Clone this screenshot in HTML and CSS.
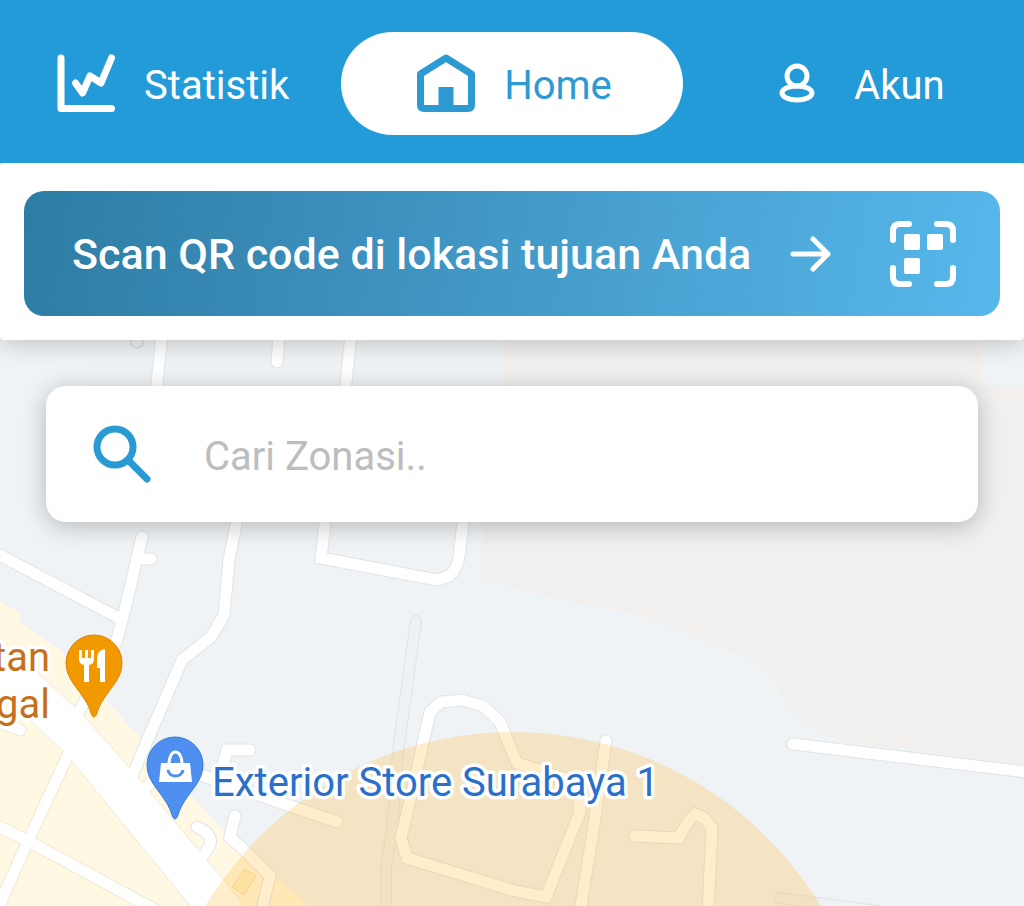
FILE: index.html
```
<!DOCTYPE html>
<html lang="id">
<head>
    <meta charset="UTF-8">
    <meta name="viewport" content="width=device-width, initial-scale=1.0">
    <title>Home</title>
    <link rel="stylesheet" href="styles.css">
</head>
<body>
    <nav class="navbar">
        <a href="#statistik" class="nav-item">
            <svg class="nav-icon" viewBox="0 0 60 60" fill="none" stroke="currentColor" stroke-width="7" stroke-linecap="round" stroke-linejoin="round">
                <path d="M5 4V54.500H55.500"/>
                <path d="M19.500 29L26.500 39L34 22L45 29L55.500 4"/>
            </svg>
            <span>Statistik</span>
        </a>
        <a href="#home" class="nav-item active">
            <svg class="nav-icon" viewBox="0 0 60 60">
                <path d="M30 4L55.500 20V51Q55.500 54.500 52 54.500H8Q4.500 54.500 4.500 51V20Z" fill="none" stroke="currentColor" stroke-width="7" stroke-linejoin="round"/>
                <path d="M22.500 33H37.500V54H22.500Z" fill="currentColor"/>
            </svg>
            <span>Home</span>
        </a>
        <a href="#akun" class="nav-item">
            <svg class="nav-icon" viewBox="0 0 60 60" fill="none" stroke="currentColor" stroke-width="5">
                <circle cx="31" cy="22" r="10"/>
                <ellipse cx="31" cy="39" rx="15" ry="7"/>
            </svg>
            <span>Akun</span>
        </a>
    </nav>

    <div class="scan-panel">
        <button type="button" class="scan-btn">
            <span>Scan QR code di lokasi tujuan Anda</span>
            <svg class="arrow" viewBox="0 0 42 42" fill="none" stroke="currentColor" stroke-width="5" stroke-linecap="round" stroke-linejoin="round">
                <path d="M3 21H38M23 6L38 21L23 36"/>
            </svg>
            <svg class="qr" viewBox="0 0 66 66">
                <path d="M3 19V10Q3 3 10 3H19M47 3H56Q63 3 63 10V19M63 47V56Q63 63 56 63H47M19 63H10Q3 63 3 56V47" fill="none" stroke="currentColor" stroke-width="6" stroke-linecap="round"/>
                <g fill="currentColor">
                    <rect x="14" y="13" width="16" height="16" rx="2"/>
                    <rect x="37" y="13" width="16" height="16" rx="2"/>
                    <rect x="14" y="37" width="16" height="16" rx="2"/>
                </g>
            </svg>
        </button>
    </div>

    <main class="map-area">
        <svg class="map" viewBox="0 340 1024 566" preserveAspectRatio="xMinYMin slice">
            <defs>
                <g id="roads">
                    <path d="M162 335L156 392M279 335L277 362M351 335L345 392"/>
                    <path d="M-10 550L119 618M142 537L126 605L116 643L77 715M141 559H151"/>
                    <path d="M238 515L229 560L224 615L211 637L182 660L132 776"/>
                    <path d="M326 515L321 558L437 580L449 576Q457 570 459 557L464 515"/>
                    <path d="M430 712L441 702L462 700L483 706L500 722L517 763L576 782L580 812L546 897L515 891L407 858L401 838L409 805Z"/>
                    <path d="M606 741L594 825L580 912"/>
                    <path d="M635 836L679 838Q686 822 695 814L703 817L712 828L708 912"/>
                    <path d="M793 744L1034 773"/>
                    <path d="M250 750H227L222 770M195 773L337 822"/>
                    <path d="M197 827Q215 835 209 847L200 860M235 816L230 837L252 858L270 876L262 908"/>
                </g>
                <g id="streets">
                    <path d="M68 755L28 841L-2 908M-10 822L28 841L152 908M-5 720L20 730M140 794L158 775"/>
                </g>
            </defs>

            <!-- land -->
            <rect y="340" width="1024" height="566" fill="#f0f3f5"/>
            <path d="M502 340V386L483 520L481 578Q560 603 635 613Q665 624 690 636L745 657Q775 675 783 700Q795 724 845 742L1024 765V385H982V340Z" fill="#f1f0ee"/>
            <path d="M0 601L20 613V622L60 650L142 740L197 802L240 848L310 906H0Z" fill="#fff8e3"/>
            <circle cx="137" cy="342" r="6" fill="none" stroke="#dfe1e4" stroke-width="2"/>

            <!-- unnamed lanes -->
            <g class="lane-edge">
                <path d="M416 621L398 752L392 830L386 868V912M780 898L900 914"/>
            </g>
            <g class="lane">
                <path d="M416 621L398 752L392 830L386 868V912M780 898L900 914"/>
            </g>

            <!-- roads, edge first and then the surface -->
            <use href="#streets" class="street-edge"/>
            <use href="#roads" class="road-edge"/>
            <path d="M-5 662L30 665L84 716L129 767L222 878L250 912H195L65 753L-5 688Z" fill="#fff" stroke="#f0e8d3" stroke-width="1"/>
            <use href="#streets" class="road"/>
            <use href="#roads" class="road"/>
            <path d="M245 869L256 876L244 895L232 887Z" fill="#ffefc4" stroke="#ecdcb2"/>

            <!-- selected zone -->
            <circle cx="513" cy="1091" r="359" fill="#ffb72f" fill-opacity="0.25"/>

            <!-- restaurant pin -->
            <path d="M94 717C91 717 91 709 85 700C77 687 66 678 66 663A28 28 0 0 1 122 663C122 678 111 687 103 700C97 709 97 717 94 717Z" fill="#f29900" stroke="#d98508"/>
            <g fill="#fff">
                <path d="M79 650V659Q79 664 84 665V682H89V665Q94 664 94 659V650H91V658H88V650H85V658H82V650Z"/>
                <path d="M105 649Q97 650 97 659V668H100V682H105Z"/>
            </g>

            <!-- shop pin -->
            <path d="M175 819C172 819 172 811 166 802C158 789 147 780 147 765A28 28 0 0 1 203 765C203 780 192 789 184 802C178 811 178 819 175 819Z" fill="#4f8ff0" stroke="#3979d8"/>
            <path d="M161 763H190L192 782H159Z" fill="#fff"/>
            <path d="M169 764C169 748 182 748 182 764" fill="none" stroke="#fff" stroke-width="3"/>
            <path d="M168 770C169 778 182 778 183 770" fill="none" stroke="#4f8ff0" stroke-width="3"/>

            <text class="place food" x="50" y="671" text-anchor="end">tan</text>
            <text class="place food" x="50" y="718" text-anchor="end">gal</text>
            <text class="place shop" x="212" y="796">Exterior Store Surabaya 1</text>
        </svg>

        <form class="search">
            <label for="zonasi" aria-label="Cari Zonasi">
                <svg class="search-icon" viewBox="0 0 60 60" fill="none" stroke="currentColor" stroke-linecap="round">
                    <circle cx="23" cy="23" r="18" stroke-width="7"/>
                    <path d="M36 36L55 55" stroke-width="7"/>
                </svg>
            </label>
            <input type="text" id="zonasi" name="zonasi" placeholder="Cari Zonasi..">
        </form>
    </main>
</body>
</html>
```
FILE: styles.css
```
*{
    box-sizing: border-box;
}
body{
    margin: 0;
    min-height: 100vh;
    display: flex;
    flex-direction: column;
    font-family: Roboto, "Liberation Sans", sans-serif;
    font-size: 40px;
    background-color: #e4e6e8;
}

.navbar{
    position: relative;
    z-index: 2;
    display: grid;
    grid-template-columns: 1fr 1fr 1fr;
    padding: 32px 0 28px;
    background-color: #249bd9;
}
.nav-item{
    display: flex;
    align-items: center;
    justify-content: center;
    gap: 28px;
    height: 103px;
    padding-left: 4px;
    border-radius: 52px;
    color: #fff;
    text-decoration: none;
}
.nav-item.active{
    background-color: #fff;
    color: #2d9ad3;
}
.nav-item span{
    padding-top: 4px;
}
.nav-icon{
    width: 60px;
    height: 60px;
}

.scan-panel{
    position: relative;
    z-index: 1;
    padding: 28px 24px 24px;
    background-color: #fff;
    border-radius: 4px;
    box-shadow: 0 4px 24px rgba(0, 0, 0, 0.2);
}
.scan-btn{
    display: flex;
    align-items: center;
    width: 100%;
    height: 125px;
    padding: 0 44px 0 48px;
    border: none;
    border-radius: 20px;
    background: linear-gradient(100deg, #2d7ca4, #3f93c1 40%, #57b8eb);
    color: #fff;
    font-family: inherit;
    font-size: 43px;
    font-weight: 500;
    text-align: left;
}
.arrow{
    width: 42px;
    height: 42px;
    margin-left: auto;
}
.qr{
    width: 66px;
    height: 66px;
    margin-left: 58px;
}

.map-area{
    position: relative;
    flex: 1;
    overflow: hidden;
    padding: 46px;
    background-color: #f0f3f5;
}
.map{
    position: absolute;
    top: 0;
    left: 0;
    width: 100%;
    height: 100%;
}
.road, .road-edge, .street-edge, .lane, .lane-edge{
    fill: none;
    stroke-linecap: round;
}
.road{
    stroke: #fff;
    stroke-width: 11px;
}
.road-edge{
    stroke: #e1e3e7;
    stroke-width: 13px;
}
.street-edge{
    stroke: #f0e8d3;
    stroke-width: 13px;
}
.lane{
    stroke: #eff1f3;
    stroke-width: 10px;
}
.lane-edge{
    stroke: #e0e2e4;
    stroke-width: 12px;
}
.place{
    font-size: 40px;
    stroke: #fff;
    stroke-width: 7px;
    stroke-linejoin: round;
    paint-order: stroke;
}
.food{
    fill: #c7701b;
}
.shop{
    fill: #2a70cb;
}

.search{
    position: relative;
    display: flex;
    align-items: center;
    gap: 52px;
    height: 136px;
    padding: 0 46px;
    background-color: #fff;
    border-radius: 20px;
    box-shadow: 0 4px 24px rgba(0, 0, 0, 0.25);
    color: #2a9ad3;
}
.search-icon{
    display: block;
    width: 60px;
    height: 60px;
}
.search input{
    flex: 1;
    min-width: 0;
    padding: 4px 0 0;
    border: none;
    outline: none;
    background: none;
    font-family: inherit;
    font-size: 40px;
}
.search input::placeholder{
    color: #bdbdbd;
}
```
